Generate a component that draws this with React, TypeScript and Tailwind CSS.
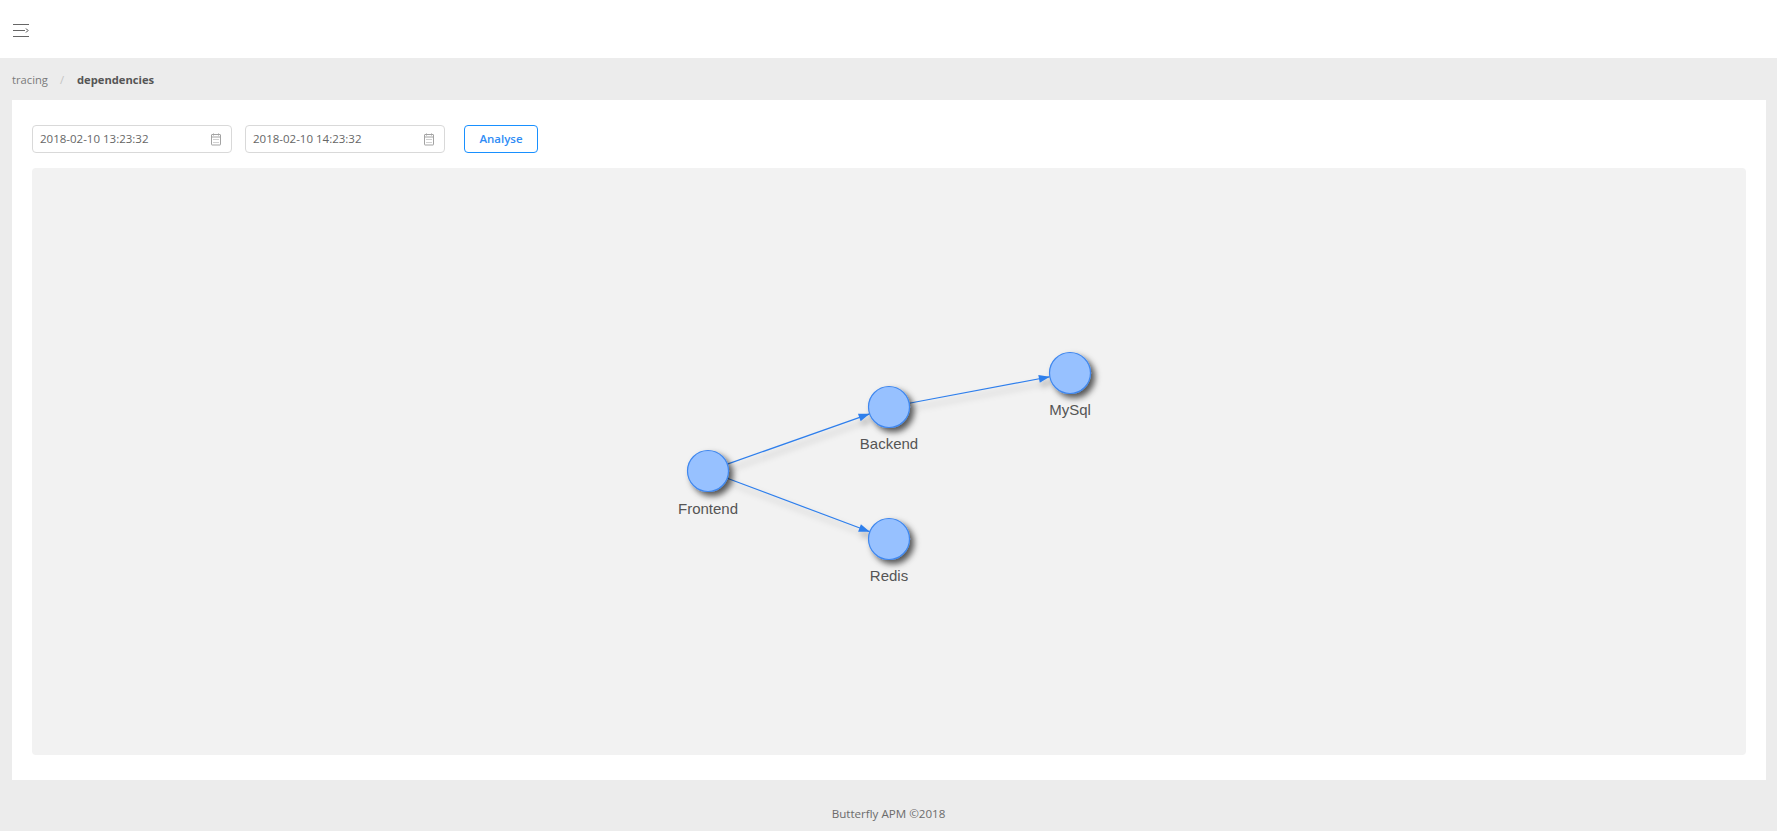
import { useState } from 'react';

const nodes = [
    { name: 'Frontend', x: 708, y: 471, labelY: 514 },
    { name: 'Backend', x: 889, y: 407, labelY: 449 },
    { name: 'MySql', x: 1070, y: 373, labelY: 415 },
    { name: 'Redis', x: 889, y: 539, labelY: 581 },
];

const edges: [number, number][] = [
    [0, 1],
    [1, 2],
    [0, 3],
];

const R = 20.5;

function edgeLine(from: number, to: number) {
    const a = nodes[from];
    const b = nodes[to];
    const dx = b.x - a.x;
    const dy = b.y - a.y;
    const len = Math.hypot(dx, dy);
    const ux = dx / len;
    const uy = dy / len;
    return {
        x1: a.x + ux * R,
        y1: a.y + uy * R,
        x2: b.x - ux * R,
        y2: b.y - uy * R,
        ux,
        uy,
    };
}

function MenuIcon() {
    return (
        <svg width="16" height="14" viewBox="0 0 16 14" fill="none" stroke="#666" strokeWidth="1">
            <path d="M0 .5h16M0 6.5h12M0 12.5h16" />
            <path d="M13 4.5l2 2-2 2" stroke="#444" />
        </svg>
    );
}

function CalendarIcon() {
    return (
        <svg width="12" height="13" viewBox="0 0 12 13" fill="none" stroke="#a3a3a3" strokeWidth="1">
            <rect x="1.5" y="1.5" width="9" height="10.5" rx="0.5" />
            <path d="M1.5 4h9M3.5 .5v2M8.5 .5v2" />
            <path d="M3.5 6.5h5M3.5 9.5h5" strokeDasharray="1 1" />
        </svg>
    );
}

function DateInput({ value }: { value: string }) {
    return (
        <div className="flex items-center justify-between w-[200px] h-7 pl-[7px] pr-[9px] bg-white border border-[#d9d9d9] rounded text-[11.5px] text-[#666]">
            <span>{value}</span>
            <CalendarIcon />
        </div>
    );
}

function DependencyGraph() {
    return (
        <svg className="w-full h-full" viewBox="32 168 1714 587">
            <defs>
                <filter id="nodeShadow" x="-50%" y="-50%" width="200%" height="200%">
                    <feDropShadow dx="4" dy="4" stdDeviation="3" floodColor="#000" floodOpacity="0.65" />
                </filter>
                <filter id="edgeShadow" x="-20%" y="-60%" width="140%" height="220%">
                    <feDropShadow dx="3" dy="5" stdDeviation="3" floodColor="#000" floodOpacity="0.3" />
                </filter>
            </defs>
            {edges.map(([from, to]) => {
                const l = edgeLine(from, to);
                const baseX = l.x2 - l.ux * 11;
                const baseY = l.y2 - l.uy * 11;
                const head = `${l.x2},${l.y2} ${baseX - l.uy * 4},${baseY + l.ux * 4} ${baseX + l.uy * 4},${baseY - l.ux * 4}`;
                return (
                    <g key={`${from}-${to}`} filter="url(#edgeShadow)">
                        <line x1={l.x1} y1={l.y1} x2={l.x2} y2={l.y2} stroke="#2f7fec" strokeWidth="1.2" />
                        <polygon points={head} fill="#2f7fec" />
                    </g>
                );
            })}
            {nodes.map((n) => (
                <g key={n.name}>
                    <circle cx={n.x} cy={n.y} r={R} fill="#97c1ff" stroke="#3f87ee" strokeWidth="1.2" filter="url(#nodeShadow)" />
                    <text
                        x={n.x}
                        y={n.labelY}
                        textAnchor="middle"
                        fontSize="15"
                        fill="#555"
                        className="font-['Liberation_Sans',sans-serif]"
                    >
                        {n.name}
                    </text>
                </g>
            ))}
        </svg>
    );
}

export default function App() {
    const [start] = useState('2018-02-10 13:23:32');
    const [end] = useState('2018-02-10 14:23:32');

    return (
        <div className="h-[831px] flex flex-col bg-[#ececec] font-['Open_Sans',sans-serif] overflow-hidden">
            <header className="h-[58px] flex items-center pl-[13px] pt-1 bg-white">
                <MenuIcon />
            </header>

            <div className="h-[42px] flex items-center pl-3 pt-0.5 text-[11.2px]">
                <span className="text-[#7a7a7a]">tracing</span>
                <span className="ml-3 mr-[13px] text-[#c4c4c4]">/</span>
                <span className="font-bold text-[#555]">dependencies</span>
            </div>

            <main className="mx-3 mr-[11px] h-[680px] pt-[25px] px-5 bg-white flex flex-col">
                <div className="flex items-center h-7">
                    <DateInput value={start} />
                    <div className="ml-[13px]">
                        <DateInput value={end} />
                    </div>
                    <button className="ml-[19px] w-[74px] h-7 bg-white border border-[#1890ff] rounded text-[11.5px] font-semibold text-[#2f8cf5]">
                        Analyse
                    </button>
                </div>
                <div className="mt-[15px] h-[587px] bg-[#f2f2f2] rounded">
                    <DependencyGraph />
                </div>
            </main>

            <footer className="flex-1 flex items-end justify-center pb-[9px] text-[11.6px] text-[#6b6b6b]">
                Butterfly APM ©2018
            </footer>
        </div>
    );
}
